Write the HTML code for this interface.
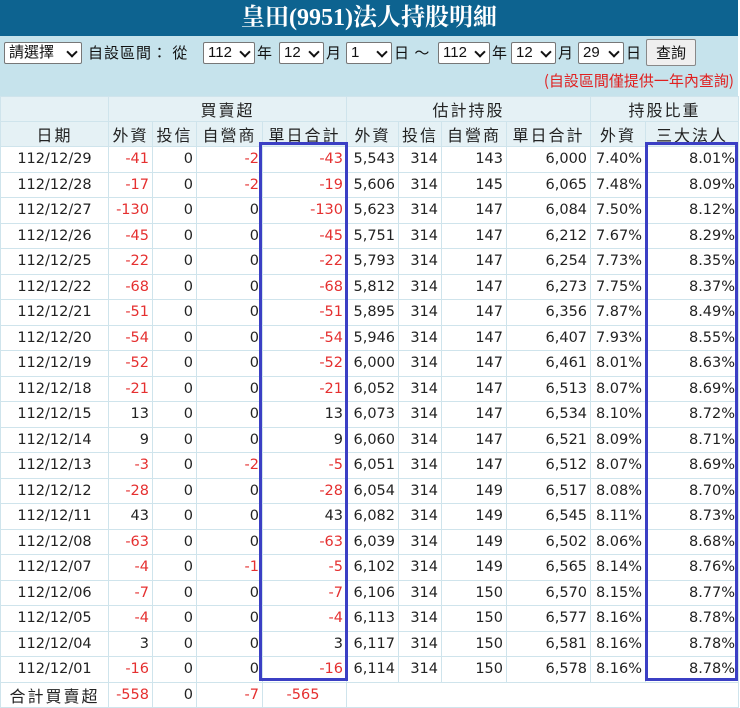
<!DOCTYPE html>
<html><head><meta charset="utf-8"><style>
*{margin:0;padding:0;box-sizing:border-box}
body{width:740px;height:707px;background:#fff;font-family:"DejaVu Sans","Noto Sans CJK TC",sans-serif;overflow:hidden;position:relative}
.title{position:absolute;left:0;top:0;width:738px;height:36px;background:#0d6390;color:#fff;text-align:center;font:bold 24px/36px "Liberation Serif","Noto Serif CJK SC",serif}
.ctl{position:absolute;left:0;top:36px;width:738px;height:60px;background:#c6e3ec;font-size:14px;color:#111}
.sel{position:absolute;top:6px;height:22px;background:#fff;border:1px solid #777;border-radius:2px;font:15px/20px "Liberation Sans","Noto Sans CJK TC",sans-serif;padding-left:4px}
.sel:after{content:"";position:absolute;right:5px;top:5px;width:6px;height:6px;border-right:2px solid #111;border-bottom:2px solid #111;transform:rotate(45deg)}
.lb{position:absolute;top:8px;font:15px/18px "Noto Sans CJK TC",sans-serif;letter-spacing:1px}
.btn{position:absolute;left:646px;top:3px;width:50px;height:27px;background:#efefef;border:1px solid #888;border-radius:2px;text-align:center;font:15px/25px "Noto Sans CJK TC",sans-serif}
.hint{position:absolute;right:4px;top:35px;color:#e02020;font:15px/20px "Noto Sans CJK TC",sans-serif}
table{position:absolute;left:0;top:96px;border-collapse:collapse;table-layout:fixed;width:738px}
td{border:1px solid #cfe4ec;height:25.5px;font-size:14.5px;text-align:right;padding-right:3px;white-space:nowrap;color:#222}
tr.h td{background:#e5f1f5;text-align:center;padding:0;font:16px "Noto Sans CJK TC",sans-serif;letter-spacing:2px;height:24px;color:#222}
td.d{text-align:center;padding:0}
.r{color:#e53030}
.box{position:absolute;border:3px solid #3b3fc4}
</style></head><body>
<div class="title">皇田(9951)法人持股明細</div>
<div class="ctl">
<div class="sel" style="left:4px;width:78px">請選擇</div>
<div class="lb" style="left:88px">自設區間： 從</div>
<div class="sel" style="left:203px;width:52px">112</div>
<div class="lb" style="left:257px">年</div>
<div class="sel" style="left:279px;width:45px">12</div>
<div class="lb" style="left:326px">月</div>
<div class="sel" style="left:346px;width:46px">1</div>
<div class="lb" style="left:394px">日 ～</div>
<div class="sel" style="left:438px;width:52px">112</div>
<div class="lb" style="left:492px">年</div>
<div class="sel" style="left:511px;width:45px">12</div>
<div class="lb" style="left:558px">月</div>
<div class="sel" style="left:578px;width:46px">29</div>
<div class="lb" style="left:626px">日</div>
<div class="btn">查詢</div>
<div class="hint">(自設區間僅提供一年內查詢)</div>
</div>
<table>
<colgroup><col style="width:108px"><col style="width:44px"><col style="width:44px"><col style="width:66px"><col style="width:84px"><col style="width:52px"><col style="width:43px"><col style="width:65px"><col style="width:84px"><col style="width:55px"><col style="width:93px"></colgroup>
<tr class="h"><td></td><td colspan="4">買賣超</td><td colspan="4">估計持股</td><td colspan="2">持股比重</td></tr>
<tr class="h"><td>日期</td><td>外資</td><td>投信</td><td>自營商</td><td>單日合計</td><td>外資</td><td>投信</td><td>自營商</td><td>單日合計</td><td>外資</td><td>三大法人</td></tr>
<tr><td class="d">112/12/29</td><td class="r">-41</td><td>0</td><td class="r">-2</td><td class="r">-43</td><td>5,543</td><td>314</td><td>143</td><td>6,000</td><td>7.40%</td><td>8.01%</td></tr>
<tr><td class="d">112/12/28</td><td class="r">-17</td><td>0</td><td class="r">-2</td><td class="r">-19</td><td>5,606</td><td>314</td><td>145</td><td>6,065</td><td>7.48%</td><td>8.09%</td></tr>
<tr><td class="d">112/12/27</td><td class="r">-130</td><td>0</td><td>0</td><td class="r">-130</td><td>5,623</td><td>314</td><td>147</td><td>6,084</td><td>7.50%</td><td>8.12%</td></tr>
<tr><td class="d">112/12/26</td><td class="r">-45</td><td>0</td><td>0</td><td class="r">-45</td><td>5,751</td><td>314</td><td>147</td><td>6,212</td><td>7.67%</td><td>8.29%</td></tr>
<tr><td class="d">112/12/25</td><td class="r">-22</td><td>0</td><td>0</td><td class="r">-22</td><td>5,793</td><td>314</td><td>147</td><td>6,254</td><td>7.73%</td><td>8.35%</td></tr>
<tr><td class="d">112/12/22</td><td class="r">-68</td><td>0</td><td>0</td><td class="r">-68</td><td>5,812</td><td>314</td><td>147</td><td>6,273</td><td>7.75%</td><td>8.37%</td></tr>
<tr><td class="d">112/12/21</td><td class="r">-51</td><td>0</td><td>0</td><td class="r">-51</td><td>5,895</td><td>314</td><td>147</td><td>6,356</td><td>7.87%</td><td>8.49%</td></tr>
<tr><td class="d">112/12/20</td><td class="r">-54</td><td>0</td><td>0</td><td class="r">-54</td><td>5,946</td><td>314</td><td>147</td><td>6,407</td><td>7.93%</td><td>8.55%</td></tr>
<tr><td class="d">112/12/19</td><td class="r">-52</td><td>0</td><td>0</td><td class="r">-52</td><td>6,000</td><td>314</td><td>147</td><td>6,461</td><td>8.01%</td><td>8.63%</td></tr>
<tr><td class="d">112/12/18</td><td class="r">-21</td><td>0</td><td>0</td><td class="r">-21</td><td>6,052</td><td>314</td><td>147</td><td>6,513</td><td>8.07%</td><td>8.69%</td></tr>
<tr><td class="d">112/12/15</td><td>13</td><td>0</td><td>0</td><td>13</td><td>6,073</td><td>314</td><td>147</td><td>6,534</td><td>8.10%</td><td>8.72%</td></tr>
<tr><td class="d">112/12/14</td><td>9</td><td>0</td><td>0</td><td>9</td><td>6,060</td><td>314</td><td>147</td><td>6,521</td><td>8.09%</td><td>8.71%</td></tr>
<tr><td class="d">112/12/13</td><td class="r">-3</td><td>0</td><td class="r">-2</td><td class="r">-5</td><td>6,051</td><td>314</td><td>147</td><td>6,512</td><td>8.07%</td><td>8.69%</td></tr>
<tr><td class="d">112/12/12</td><td class="r">-28</td><td>0</td><td>0</td><td class="r">-28</td><td>6,054</td><td>314</td><td>149</td><td>6,517</td><td>8.08%</td><td>8.70%</td></tr>
<tr><td class="d">112/12/11</td><td>43</td><td>0</td><td>0</td><td>43</td><td>6,082</td><td>314</td><td>149</td><td>6,545</td><td>8.11%</td><td>8.73%</td></tr>
<tr><td class="d">112/12/08</td><td class="r">-63</td><td>0</td><td>0</td><td class="r">-63</td><td>6,039</td><td>314</td><td>149</td><td>6,502</td><td>8.06%</td><td>8.68%</td></tr>
<tr><td class="d">112/12/07</td><td class="r">-4</td><td>0</td><td class="r">-1</td><td class="r">-5</td><td>6,102</td><td>314</td><td>149</td><td>6,565</td><td>8.14%</td><td>8.76%</td></tr>
<tr><td class="d">112/12/06</td><td class="r">-7</td><td>0</td><td>0</td><td class="r">-7</td><td>6,106</td><td>314</td><td>150</td><td>6,570</td><td>8.15%</td><td>8.77%</td></tr>
<tr><td class="d">112/12/05</td><td class="r">-4</td><td>0</td><td>0</td><td class="r">-4</td><td>6,113</td><td>314</td><td>150</td><td>6,577</td><td>8.16%</td><td>8.78%</td></tr>
<tr><td class="d">112/12/04</td><td>3</td><td>0</td><td>0</td><td>3</td><td>6,117</td><td>314</td><td>150</td><td>6,581</td><td>8.16%</td><td>8.78%</td></tr>
<tr><td class="d">112/12/01</td><td class="r">-16</td><td>0</td><td>0</td><td class="r">-16</td><td>6,114</td><td>314</td><td>150</td><td>6,578</td><td>8.16%</td><td>8.78%</td></tr>
<tr><td class="d" style="font:16px 'Noto Sans CJK TC',sans-serif;letter-spacing:2px;height:24px">合計買賣超</td><td class="r">-558</td><td>0</td><td class="r">-7</td><td class="r" style="text-align:center">-565</td><td colspan="6"></td></tr>
</table>
<div class="box" style="left:259px;top:142px;width:89px;height:539px"></div>
<div class="box" style="left:645px;top:142px;width:93px;height:539px"></div>
</body></html>
